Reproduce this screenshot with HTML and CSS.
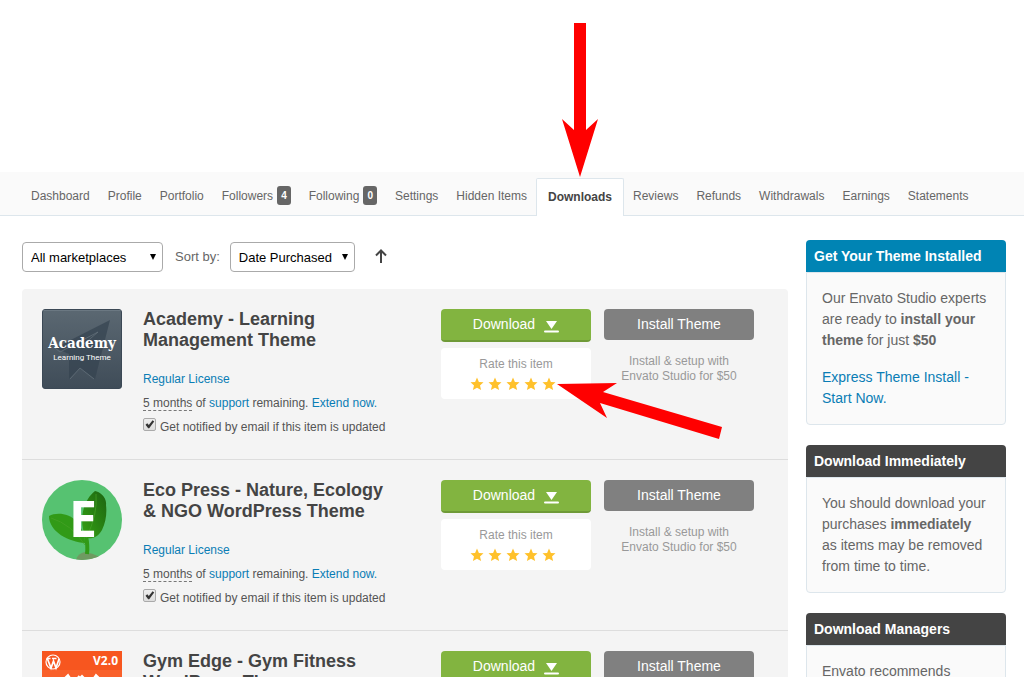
FILE: index.html
```html
<!DOCTYPE html>
<html lang="en">
<head>
<meta charset="utf-8">
<title>Downloads</title>
<link rel="stylesheet" href="styles.css">
</head>
<body>
<svg class="symbols" aria-hidden="true">
  <symbol id="caret" viewBox="0 0 8 8"><path d="M1 1h6L4 7z"/></symbol>
  <symbol id="check" viewBox="0 0 13 13"><path d="M2.500 6.800L4.300 5.200 5.800 7 9.600 2.200 11.200 3.600 6.200 10.300H5.200z" fill="#333"/></symbol>
  <symbol id="download" viewBox="0 0 15 13"><path d="M2 1h11L7.500 9z"/><path d="M1 11.500h13" stroke="#fff" stroke-width="2" stroke-linecap="round"/></symbol>
  <symbol id="star" viewBox="0 0 14 14"><path d="M7 .6l1.900 4.300 4.600.4-3.500 3.100 1.100 4.700L7 10.700l-4.100 2.400L4 8.400.5 5.300l4.600-.4z"/></symbol>
</svg>

<nav class="account-nav" aria-label="Account">
  <a class="tab" href="#">Dashboard</a>
  <a class="tab" href="#">Profile</a>
  <a class="tab" href="#">Portfolio</a>
  <a class="tab" href="#">Followers <span class="badge">4</span></a>
  <a class="tab" href="#">Following <span class="badge">0</span></a>
  <a class="tab" href="#">Settings</a>
  <a class="tab" href="#">Hidden Items</a>
  <a class="tab tab-active" href="#" aria-current="page">Downloads</a>
  <a class="tab" href="#">Reviews</a>
  <a class="tab" href="#">Refunds</a>
  <a class="tab" href="#">Withdrawals</a>
  <a class="tab" href="#">Earnings</a>
  <a class="tab" href="#">Statements</a>
</nav>

<div class="page">
  <main class="main">
    <form class="filters">
      <span class="picker">
        <select class="picker-select" aria-label="Marketplace"><option>All marketplaces</option></select>
        <svg class="picker-caret" aria-hidden="true"><use href="#caret"/></svg>
      </span>
      <label class="sort-label" for="sort">Sort by:</label>
      <span class="picker picker-sort">
        <select class="picker-select" id="sort"><option>Date Purchased</option></select>
        <svg class="picker-caret" aria-hidden="true"><use href="#caret"/></svg>
      </span>
      <button class="direction" type="button" aria-label="Sort ascending">
        <svg width="14" height="16" viewBox="0 0 14 16" fill="none" stroke="#444" stroke-width="2"><path d="M7 14V1M2 6.500L7 1.500l5 5"/></svg>
      </button>
    </form>

    <div class="items">
      <article class="item">
        <svg class="thumb" viewBox="0 0 80 80" role="img" aria-label="Academy">
          <defs><linearGradient id="slate" x2="0" y2="1"><stop stop-color="#5b6872"/><stop offset="1" stop-color="#3f4c58"/></linearGradient></defs>
          <rect x=".5" y=".5" width="79" height="79" rx="2.500" fill="url(#slate)" stroke="#3b4855"/>
          <path d="M1.500 1.500h77" stroke="#6b7882"/>
          <path d="M68 11L13 39l14 6v25l11-11 15 11z" fill="#354350" opacity=".7"/>
          <path d="M28 70l10-11 14 11M13 39l5 4 38-20-14 12" fill="none" stroke="#66737d" stroke-width=".7"/>
          <text class="academy-name" x="40" y="39">Academy</text>
          <text class="academy-sub" x="40" y="51">Learning Theme</text>
        </svg>
        <div class="details">
          <h2 class="title">Academy - Learning Management Theme</h2>
          <a class="license" href="#">Regular License</a>
          <p class="support"><span class="term">5 months</span> of <a href="#">support</a> remaining. <a href="#">Extend now.</a></p>
          <label class="notify"><span class="tick"><input class="tick-box" type="checkbox" checked><svg class="tick-mark" aria-hidden="true"><use href="#check"/></svg></span>Get notified by email if this item is updated</label>
        </div>
        <div class="actions">
          <button class="button button-download" type="button">Download <svg class="download-icon" aria-hidden="true"><use href="#download"/></svg></button>
          <div class="rating">Rate this item
            <div class="stars" role="img" aria-label="5 stars"><svg class="star"><use href="#star"/></svg><svg class="star"><use href="#star"/></svg><svg class="star"><use href="#star"/></svg><svg class="star"><use href="#star"/></svg><svg class="star"><use href="#star"/></svg></div>
          </div>
        </div>
        <div class="actions">
          <button class="button button-install" type="button">Install Theme</button>
          <p class="install-note">Install &amp; setup with<br>Envato Studio for $50</p>
        </div>
      </article>

      <article class="item">
        <svg class="thumb" viewBox="0 0 80 80" role="img" aria-label="Eco Press">
          <defs>
            <linearGradient id="leaf" x1="1" x2="0" y2="1"><stop stop-color="#1c6311"/><stop offset="1" stop-color="#35a313"/></linearGradient>
            <clipPath id="disc"><circle cx="40" cy="40" r="40"/></clipPath>
          </defs>
          <g clip-path="url(#disc)">
            <path d="M0 0h80v80H0z" fill="#56c271"/>
            <path d="M34 80q2-7 9-8 7 1 15 5v3z" fill="#6f9a61"/>
            <path d="M7 36c7-4 20-3 27 5 6 7 9 14 9 22C27 62 7 52 7 36z" fill="#319a17"/>
            <path d="M53 11c5 1 12 6 11 14 1 8 0 17-4 25-4 7-9 9-16 8-8-17-3-38 9-47z" fill="url(#leaf)"/>
            <path d="M44 56q2 10 1 18" fill="none" stroke="#319a17" stroke-width="4"/>
            <path d="M54 14q2 21-10 44M9 38q20 6 34 27" fill="none" stroke="#48a228" stroke-width=".7"/>
          </g>
          <text class="eco-letter" x="41" y="57">E</text>
        </svg>
        <div class="details">
          <h2 class="title">Eco Press - Nature, Ecology &amp; NGO WordPress Theme</h2>
          <a class="license" href="#">Regular License</a>
          <p class="support"><span class="term">5 months</span> of <a href="#">support</a> remaining. <a href="#">Extend now.</a></p>
          <label class="notify"><span class="tick"><input class="tick-box" type="checkbox" checked><svg class="tick-mark" aria-hidden="true"><use href="#check"/></svg></span>Get notified by email if this item is updated</label>
        </div>
        <div class="actions">
          <button class="button button-download" type="button">Download <svg class="download-icon" aria-hidden="true"><use href="#download"/></svg></button>
          <div class="rating">Rate this item
            <div class="stars" role="img" aria-label="5 stars"><svg class="star"><use href="#star"/></svg><svg class="star"><use href="#star"/></svg><svg class="star"><use href="#star"/></svg><svg class="star"><use href="#star"/></svg><svg class="star"><use href="#star"/></svg></div>
          </div>
        </div>
        <div class="actions">
          <button class="button button-install" type="button">Install Theme</button>
          <p class="install-note">Install &amp; setup with<br>Envato Studio for $50</p>
        </div>
      </article>

      <article class="item">
        <svg class="thumb" viewBox="0 0 80 80" role="img" aria-label="Gym Edge">
          <path d="M0 0h80v80H0z" fill="#f9602a"/>
          <path d="M0 0h80v19H0z" fill="#f7561f"/>
          <circle cx="11" cy="11" r="7" fill="none" stroke="#fff" stroke-width="1.200"/>
          <path d="M5.500 8l3.500 9 2.500-7 2.500 7 3-9M4.500 7.500h4M10 7.500h4.500" fill="none" stroke="#fff" stroke-width="1.700"/>
          <text class="gym-version" x="76" y="14">V2.0</text>
          <path d="M23 27l3-3 2 3zM36 25l2 2 2-2 2 2M52 27l2-3 3 3z" fill="#fff" stroke="#fff" stroke-width="2"/>
        </svg>
        <div class="details">
          <h2 class="title">Gym Edge - Gym Fitness WordPress Theme</h2>
        </div>
        <div class="actions">
          <button class="button button-download" type="button">Download <svg class="download-icon" aria-hidden="true"><use href="#download"/></svg></button>
        </div>
        <div class="actions">
          <button class="button button-install" type="button">Install Theme</button>
        </div>
      </article>
    </div>
  </main>

  <aside class="sidebar">
    <section class="panel panel-blue">
      <h3 class="panel-title">Get Your Theme Installed</h3>
      <div class="panel-body">
        <p>Our Envato Studio experts are ready to <b>install your theme</b> for just <b>$50</b></p>
        <p><a href="#">Express Theme Install - Start Now.</a></p>
      </div>
    </section>
    <section class="panel">
      <h3 class="panel-title">Download Immediately</h3>
      <div class="panel-body">
        <p>You should download your purchases <b>immediately</b> as items may be removed from time to time.</p>
      </div>
    </section>
    <section class="panel">
      <h3 class="panel-title">Download Managers</h3>
      <div class="panel-body">
        <p>Envato recommends</p>
      </div>
    </section>
  </aside>
</div>

<svg class="pointers" width="1024" height="677" viewBox="0 0 1024 677" fill="#f00" aria-hidden="true">
  <path d="M574 23h12v107l12-11-18 58-18-58 12 11z"/>
  <path d="M557 384l60-1-14 9 119 35-3 12-119-36 7 15z"/>
</svg>
</body>
</html>
```
FILE: styles.css
```css
* { box-sizing: border-box; }
html { overflow: hidden; }
body {
  margin: 0;
  padding-top: 172px;
  height: 100vh;
  overflow: hidden;
  position: relative;
  background: #fff;
  color: #555;
  font: 12px/18px "Liberation Sans", Arial, sans-serif;
}
a { color: #0a7db5; text-decoration: none; }
p, h2, h3 { margin: 0; }
button, select, input { font-family: inherit; margin: 0; }
.symbols { position: absolute; width: 0; height: 0; }

.account-nav {
  display: flex;
  height: 44px;
  padding: 6px 22px 0;
  background: #fafafa;
  border-bottom: 1px solid #dde6ec;
}
.tab {
  display: flex;
  align-items: center;
  gap: 4px;
  padding: 0 9px 2px;
  color: #666;
  white-space: nowrap;
}
.tab-active {
  height: 38px;
  padding: 0 11px 1px;
  background: #fff;
  border: 1px solid #dde6ec;
  border-bottom: 0;
  border-radius: 2px 2px 0 0;
  color: #444;
  font-weight: bold;
}
.badge {
  padding: 0 4px;
  border-radius: 3px;
  background: #666;
  color: #fff;
  font-size: 10px;
  font-weight: bold;
  line-height: 19px;
}

.page {
  display: flex;
  align-items: flex-start;
  gap: 18px;
  padding: 24px 18px 0 22px;
}
.main { flex: 1; min-width: 0; }

.filters {
  display: flex;
  align-items: center;
  gap: 12px;
  height: 34px;
  margin-bottom: 15px;
}
.picker { display: grid; width: 141px; }
.picker-sort { width: 125px; margin-left: -2px; }
.picker-select {
  grid-area: 1 / 1;
  appearance: none;
  height: 30px;
  padding: 0 8px;
  border: 1px solid #aaa;
  border-radius: 4px;
  background: #fff;
  color: #000;
  font-size: 13px;
}
.picker-caret {
  grid-area: 1 / 1;
  place-self: center end;
  width: 8px;
  height: 8px;
  margin-right: 6px;
  pointer-events: none;
}
.sort-label { color: #666; font-size: 13px; }
.direction {
  display: flex;
  margin-left: 7px;
  padding: 0;
  border: 0;
  background: none;
}

.items { border-radius: 4px; background: #f4f4f4; }
.item {
  display: flex;
  min-height: 171px;
  padding: 20px 34px 20px 20px;
  border-bottom: 1px solid #ddd;
}
.thumb { flex: none; width: 80px; height: 80px; margin-right: 21px; }
.details { flex: 1; min-width: 0; padding-right: 50px; }
.title {
  margin-bottom: 19px;
  color: #444;
  font-size: 18px;
  line-height: 21px;
}
.license { display: block; }
.support { margin-top: 6px; }
.term { border-bottom: 1px dashed #777; }
.notify { display: flex; align-items: center; gap: 4px; margin-top: 6px; white-space: nowrap; }
.tick { display: grid; margin-bottom: 5px; }
.tick-box {
  grid-area: 1 / 1;
  appearance: none;
  width: 13px;
  height: 13px;
  border: 1px solid #aaa;
  border-radius: 2px;
  background: linear-gradient(#eee, #ddd);
}
.tick-mark { grid-area: 1 / 1; width: 13px; height: 13px; pointer-events: none; }

.actions { flex: none; width: 150px; text-align: center; }
.actions + .actions { margin-left: 13px; }
.button {
  display: flex;
  align-items: center;
  justify-content: center;
  width: 100%;
  height: 31px;
  padding: 0 0 2px;
  border: 0;
  border-radius: 4px;
  color: #fff;
  font-size: 14px;
}
.button-download {
  gap: 9px;
  height: 33px;
  background: #82b440;
  border-bottom: 2px solid #6f9a37;
}
.button-install { background: #808080; }
.download-icon { width: 15px; height: 13px; margin-top: 5px; fill: #fff; }
.rating {
  margin-top: 6px;
  padding: 7px 0;
  border-radius: 4px;
  background: #fff;
  color: #999;
}
.stars { display: flex; justify-content: center; gap: 4px; height: 19px; padding: 4px 6px 0 0; }
.star { width: 14px; height: 14px; fill: #ffc12b; }
.install-note { margin-top: 14px; color: #999; line-height: 15px; }

.sidebar { flex: none; width: 200px; }
.panel { margin-bottom: 20px; }
.panel-title {
  padding: 0 8px;
  border-radius: 4px 4px 0 0;
  background: #444;
  color: #fff;
  font-size: 14px;
  line-height: 32px;
}
.panel-blue .panel-title { background: #0084b4; }
.panel-body {
  padding: 15px;
  border: 1px solid #dde6ec;
  border-radius: 0 0 4px 4px;
  background: #fafafa;
  color: #666;
  font-size: 14px;
  line-height: 21px;
}
.panel-body p + p { margin-top: 16px; }

.academy-name { fill: #fff; font: bold 15px "DejaVu Serif Condensed", "DejaVu Serif", serif; text-anchor: middle; }
.academy-sub { fill: #fff; font: 8px Roboto, sans-serif; text-anchor: middle; }
.eco-letter { fill: #fff; font: bold 50px "Open Sans", sans-serif; text-anchor: middle; }
.gym-version { fill: #fff; font: bold 12px "Open Sans", sans-serif; text-anchor: end; }

.pointers { position: absolute; top: 0; left: 0; pointer-events: none; }
```
